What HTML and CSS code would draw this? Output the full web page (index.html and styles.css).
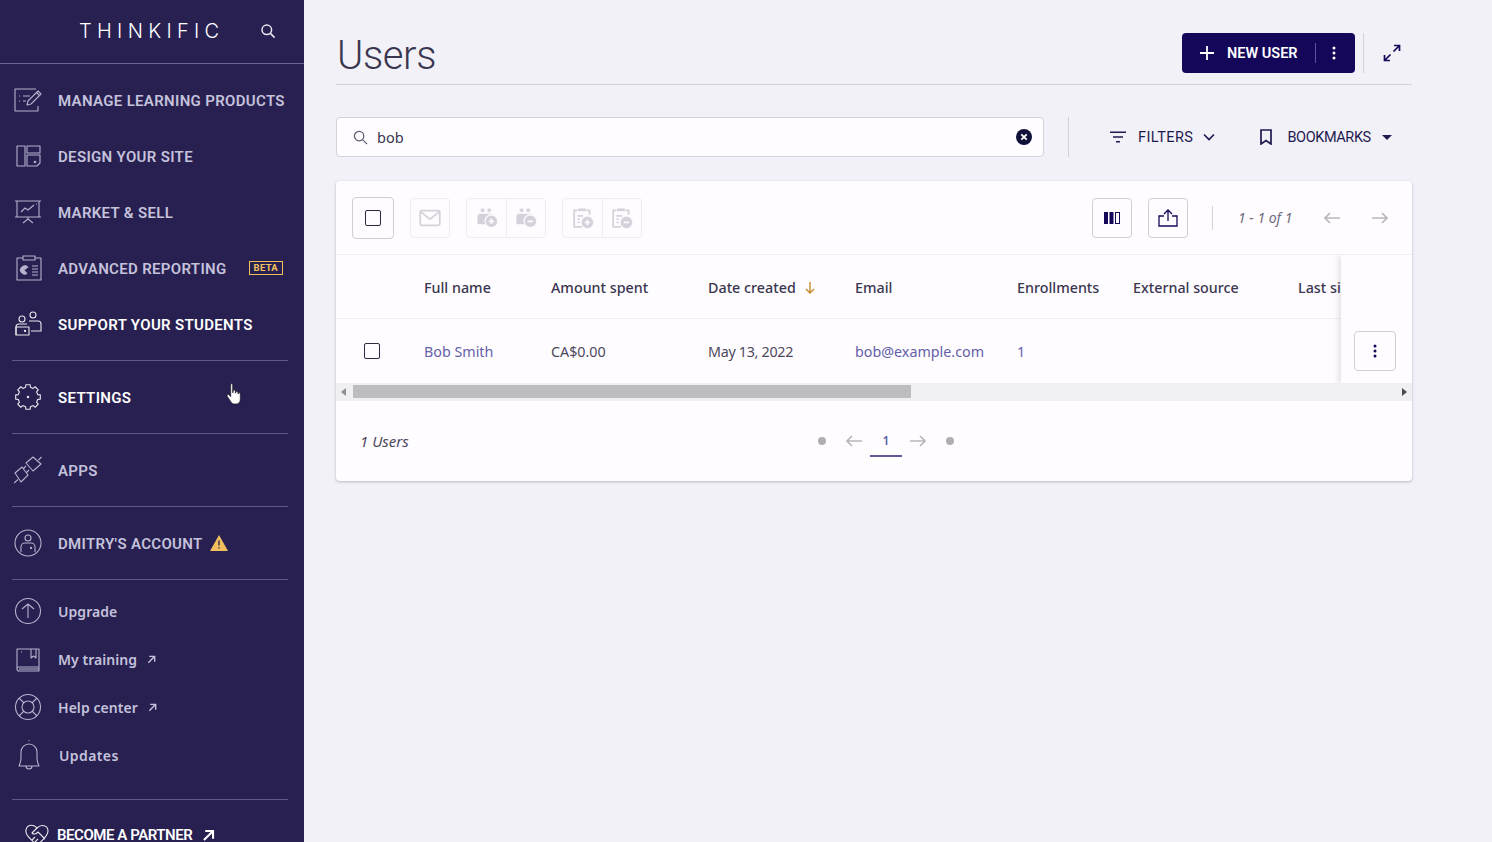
FILE: index.html
```html
<!DOCTYPE html>
<html lang="en">
<head>
<meta charset="utf-8">
<title>Users</title>
<link rel="stylesheet" href="styles.css">
</head>
<body>
<div class="app">
<aside class="sidebar">
  <div class="brand">
    <span class="logo">THINKIFIC</span>
    <svg class="brand-search" viewBox="0 0 16 16"><circle cx="6.800" cy="6.800" r="4.800"/><path d="M10.400 10.400l4.200 4.200"/></svg>
  </div>
  <nav class="section">
    <a class="item"><svg class="ico" viewBox="0 0 28 24"><path d="M22 1H1v22h23v-5"/><path d="M5 8h1M5 13h1M9 8h7M9 13h3"/><path d="M13 17l1-4 10-10 3 3-10 10zM22 4l3 3"/></svg><span>MANAGE LEARNING PRODUCTS</span></a>
    <a class="item"><svg class="ico" viewBox="0 0 28 24"><rect x="3" y="2" width="8" height="20"/><rect x="13" y="2" width="13" height="7"/><path d="M13 11h13v8l-3 3H13z"/><circle cx="21" cy="18" r=".8"/></svg><span>DESIGN YOUR SITE</span></a>
    <a class="item"><svg class="ico" viewBox="0 0 28 24"><path d="M1 1h26M3 1v16M25 1v16M1 17h26M14 17v2M9 23l5-4 5 4"/><path d="M7 12l4-4 3 2 6-5M22 4h1"/></svg><span>MARKET &amp; SELL</span></a>
    <a class="item"><svg class="ico" viewBox="0 0 28 26"><path d="M9 3H3v22h24V3h-6"/><rect x="9" y="1" width="12" height="4"/><path class="fill" d="M13.500 11.600a4.500 4.500 0 1 0 0 6.800l-3-3.400z"/><path class="fill" d="M11 10.300a4.500 4.500 0 0 1 3.500 2L11 14.800z"/><path d="M18 11h6M18 14h6M18 17h6M18 20h6"/></svg><span>ADVANCED REPORTING</span><b class="beta">BETA</b></a>
    <a class="item on"><svg class="ico" viewBox="0 0 28 26"><circle cx="8" cy="8" r="3"/><circle cx="19" cy="4" r="3"/><path d="M2 24v-8a3 3 0 0 1 3-3h8M15 10h9a3 3 0 0 1 3 3v7H17"/><path d="M2 16h13v8H2z"/><circle cx="11" cy="20" r=".6"/></svg><span>SUPPORT YOUR STUDENTS</span></a>
  </nav>
  <nav class="section rule">
    <a class="item on"><svg class="ico" viewBox="0 0 28 26"><path d="M23.700 10.580L26.310 10.830V15.170L23.700 15.420L22.570 18.150L24.240 20.170L21.170 23.240L19.150 21.570L16.420 22.700L16.170 25.310H11.830L11.580 22.700L8.850 21.570L6.830 23.240L3.760 20.170L5.430 18.150L4.300 15.420L1.690 15.170V10.830L4.300 10.580L5.430 7.850L3.760 5.830L6.830 2.760L8.850 4.430L11.580 3.300L11.830 .69H16.170L16.420 3.300L19.150 4.430L21.170 2.760L24.240 5.830L22.570 7.850z"/><circle cx="14" cy="13" r=".7"/></svg><span>SETTINGS</span></a>
  </nav>
  <nav class="section rule">
    <a class="item"><svg class="ico" viewBox="0 0 28 28"><path d="M12 7l7-6 8 7-8 7zM1 17l7-6 6 8-7 7zM0 27l4-3.500M27.500 1l-3 3M12 10L9 13M15 14l-3 3"/></svg><span>APPS</span></a>
  </nav>
  <nav class="section rule">
    <a class="item"><svg class="ico" viewBox="0 0 28 28"><circle cx="14" cy="14" r="13"/><circle cx="14" cy="9" r="3"/><path d="M7 23v-5a4 4 0 0 1 4-4h6a4 4 0 0 1 4 4v5"/><circle cx="17" cy="19" r=".6"/></svg><span>DMITRY'S ACCOUNT</span><svg class="warn" viewBox="0 0 20 18"><path d="M10 1l9 16H1z"/><path class="mark" d="M10 6.500v5M10 13.200v1.400"/></svg></a>
  </nav>
  <nav class="section rule minor">
    <a class="item small"><svg class="ico" viewBox="0 0 28 28"><circle cx="14" cy="14" r="12.500"/><path d="M14 21V7M8 12l6-5 6 5"/></svg><span>Upgrade</span></a>
    <a class="item small"><svg class="ico" viewBox="0 0 28 26"><path d="M3 21V3h22v18H5a2 2 0 0 0 0 4h20v-4M3 21v2"/><path d="M17 3v9l2.500-2 2.500 2V3M7 6h1"/><path d="M5 23h20"/></svg><span>My training</span><svg class="ext" viewBox="0 0 10 10"><path d="M1.500 8.500l7-7M2.500 1.500h6v6"/></svg></a>
    <a class="item small"><svg class="ico" viewBox="0 0 28 28"><circle cx="14" cy="14" r="12.500"/><circle cx="14" cy="14" r="6"/><path d="M5 5l5 5M23 5l-5 5M5 23l5-5M23 23l-5-5"/></svg><span>Help center</span><svg class="ext" viewBox="0 0 10 10"><path d="M1.500 8.500l7-7M2.500 1.500h6v6"/></svg></a>
    <a class="item small bell"><svg class="ico" viewBox="0 0 28 32"><path d="M14 1v1M4 27c1-3 2-4 2-8v-6a8 8 0 0 1 16 0v6c0 4 1 5 2 8zM11 27a3 3 0 0 0 6 0"/></svg><span>Updates</span></a>
  </nav>
  <div class="partner rule">
    <a class="item on"><svg class="ico heart" viewBox="0 0 26 22"><path d="M13 4c-3-4-10-4-11 2-1 4 3 8 11 15 5-4 11-9 11-14 0-6-7-7-11-3l-5 5c2 2 4 1 6-1l7 7M8 16l3-3M11 18l3-3"/></svg><span>BECOME A PARTNER</span><svg class="ext big" viewBox="0 0 10 10"><path d="M1.500 8.500l7-7M2.500 1.500h6v6"/></svg></a>
  </div>
  <svg class="hand" viewBox="0 0 18 24"><path d="M5 1.500c1-.8 2 0 2 1v8h.6V8.500c.8-1 2-.8 2.300.3v2.200h.5V9.800c.8-.8 2-.5 2.200.5v1.500h.5V11c.8-.6 1.900-.2 2 .8v5.700c0 3-1.800 5-4.500 5H9c-2 0-3-1-4-2.500L1.300 14.300c-.6-1.300 1-2.300 2-1.300L5 15z"/></svg>
</aside>
<main class="main">
  <header class="head">
    <h1 class="title">Users</h1>
    <div class="head-actions">
      <div class="primary">
        <svg class="plus" viewBox="0 0 14 14"><path d="M7 0v14M0 7h14"/></svg>
        <span class="primary-label">NEW USER</span>
        <i class="primary-sep"></i>
        <svg class="kebab" viewBox="0 0 4 14"><circle cx="2" cy="2" r="1.500"/><circle cx="2" cy="7" r="1.500"/><circle cx="2" cy="12" r="1.500"/></svg>
      </div>
      <i class="head-sep"></i>
      <svg class="expand" viewBox="0 0 18 18"><path d="M10.500 7.500L16.500 1.500M11 1.500h5.500V7M7.500 10.500L1.500 16.500M7 16.500H1.500V11"/></svg>
    </div>
  </header>
  <div class="searchbar">
    <div class="search">
      <svg class="search-ico" viewBox="0 0 16 16"><circle cx="6.500" cy="6.500" r="5"/><path d="M10.200 10.200l4.800 4.800"/></svg>
      <span class="query">bob</span>
      <svg class="clear" viewBox="0 0 16 16"><circle class="clear-bg" cx="8" cy="8" r="8"/><path d="M5.300 5.300l5.400 5.400M10.700 5.300l-5.400 5.400"/></svg>
    </div>
    <i class="search-sep"></i>
    <div class="tool filters">
      <svg class="t-ico" viewBox="0 0 16 12"><path d="M0 1.200h16M3 6h10M6 10.800h4"/></svg>
      <span>FILTERS</span>
      <svg class="chev" viewBox="0 0 12 8"><path d="M1 1.500l5 5 5-5"/></svg>
    </div>
    <div class="tool bookmarks">
      <svg class="bm" viewBox="0 0 12 16"><path d="M1 1h10v14l-5-3.500L1 15z"/></svg>
      <span>BOOKMARKS</span>
      <svg class="caret" viewBox="0 0 10 5"><path d="M0 0h10L5 5z"/></svg>
    </div>
  </div>
  <section class="card">
    <div class="toolbar">
      <div class="sq select"><i class="box"></i></div>
      <div class="sq dis"><svg viewBox="0 0 18 14"><rect x="1" y="1" width="16" height="12" rx="1"/><path d="M1.500 2l7.500 6 7.500-6"/></svg></div>
      <div class="group">
        <div class="sq dis"><svg viewBox="0 0 20 20"><g class="solid"><circle cx="6" cy="3" r="2"/><circle cx="12" cy="3" r="2"/><path d="M1 15V9a3 3 0 0 1 3-3h10a3 3 0 0 1 2 1a6 6 0 0 0-7 9H2z"/></g><circle class="solid" cx="14" cy="13" r="5.500"/><path class="cut" d="M14 10.500v5M11.500 13h5"/></svg></div>
        <div class="sq dis"><svg viewBox="0 0 20 20"><g class="solid"><circle cx="6" cy="3" r="2"/><circle cx="12" cy="3" r="2"/><path d="M1 15V9a3 3 0 0 1 3-3h10a3 3 0 0 1 2 1a6 6 0 0 0-7 9H2z"/></g><circle class="solid" cx="14" cy="13" r="5.500"/><path class="cut" d="M11.500 13h5"/></svg></div>
      </div>
      <div class="group">
        <div class="sq dis"><svg viewBox="0 0 20 20"><path class="thick" d="M5 3H2v15h7M13 3h3v4"/><rect class="solid" x="5" y="1" width="8" height="3"/><path class="thick" d="M5 8h5M5 11h2M5 14h2"/><circle class="solid" cx="14" cy="14" r="5.500"/><path class="cut" d="M14 11.500v5M11.500 14h5"/></svg></div>
        <div class="sq dis"><svg viewBox="0 0 20 20"><path class="thick" d="M5 3H2v15h7M13 3h3v4"/><rect class="solid" x="5" y="1" width="8" height="3"/><path class="thick" d="M5 8h5M5 11h2M5 14h2"/><circle class="solid" cx="14" cy="14" r="5.500"/><path class="cut" d="M11.500 14h5"/></svg></div>
      </div>
      <div class="toolbar-right">
        <div class="sq act"><svg class="cols" viewBox="0 0 16 12"><path class="navy" d="M0 0h4v12H0zM5.500 0h4v12h-4z"/><rect class="navy-o" x="11.500" y=".5" width="4" height="11"/></svg></div>
        <div class="sq act"><svg class="export" viewBox="0 0 20 18"><path class="navy-l" d="M6 7H1v10h18V7h-5M10 12V1M6 5l4-4 4 4"/></svg></div>
        <i class="tb-sep"></i>
        <span class="range">1 - 1 of 1</span>
        <svg class="arr" viewBox="0 0 16 12"><path d="M16 6H1M6 1L1 6l5 5"/></svg>
        <svg class="arr" viewBox="0 0 16 12"><path d="M0 6h15M10 1l5 5-5 5"/></svg>
      </div>
    </div>
    <div class="table">
      <div class="row thead">
        <span></span><span>Full name</span><span>Amount spent</span>
        <span class="sorted">Date created<svg viewBox="0 0 10 12"><path d="M5 0v11M1 7l4 4 4-4"/></svg></span>
        <span>Email</span><span>Enrollments</span><span>External source</span><span>Last sign in</span>
      </div>
      <div class="row tbody">
        <span><i class="box"></i></span><span class="link">Bob Smith</span><span>CA$0.00</span><span class="date">May 13, 2022</span>
        <span class="link">bob@example.com</span><span class="link">1</span><span></span><span></span>
      </div>
      <div class="sticky"><div class="sq act kb"><svg viewBox="0 0 4 14"><circle cx="2" cy="2" r="1.500"/><circle cx="2" cy="7" r="1.500"/><circle cx="2" cy="12" r="1.500"/></svg></div></div>
    </div>
    <div class="scrollbar">
      <i class="sb-left"></i><div class="sb-track"><i class="sb-thumb"></i></div><i class="sb-right"></i>
    </div>
    <footer class="foot">
      <span class="count">1 Users</span>
      <div class="pager">
        <i class="dot"></i>
        <svg class="arr" viewBox="0 0 16 12"><path d="M16 6H1M6 1L1 6l5 5"/></svg>
        <span class="page">1</span>
        <svg class="arr" viewBox="0 0 16 12"><path d="M0 6h15M10 1l5 5-5 5"/></svg>
        <i class="dot"></i>
      </div>
    </footer>
  </section>
</main>
</div>
</body>
</html>
```

FILE: styles.css
```css
* { box-sizing: border-box; }
html, body { margin: 0; height: 100%; overflow: hidden; }
body { font-family: "Noto Sans", sans-serif; background: #f3f1f8; color: #3a3650; }
i { display: block; }
.app { display: flex; height: 842px; overflow: hidden; }

.sidebar { position: relative; width: 304px; flex: none; background: #272050; overflow: hidden; }
.brand { height: 64px; display: flex; align-items: center; padding: 0 28px 2px 79px; border-bottom: 1px solid #6a6496; justify-content: space-between; }
.logo { font-family: Inter, sans-serif; font-weight: 300; font-size: 20px; letter-spacing: 5.300px; color: #fff; line-height: 1; }
.brand-search { width: 16px; height: 16px; fill: none; stroke: #e9e7f2; stroke-width: 1.500; }
.section { padding: 8px 0; }
.rule { margin: 0 16px 0 12px; border-top: 1px solid #5f5a8a; }
.section.rule .item { margin: 0 -16px 0 -12px; }
.section.minor { padding-bottom: 20px; padding-top: 7px; }
.item { display: flex; align-items: center; height: 56px; padding-left: 14px; font-family: Roboto, sans-serif; font-weight: 600; font-size: 15px; letter-spacing: .33px; color: #c5c2dc; white-space: nowrap; }
.item > span { margin-top: 2px; }
.item.on { color: #fff; }
.ico { width: 28px; height: 28px; margin-right: 16px; flex: none; fill: none; stroke: currentColor; stroke-width: 1.100; opacity: .9; stroke-linejoin: round; }
.ico .fill { fill: currentColor; stroke: none; }
.beta { margin-left: 22px; border: 1px solid #f3c25f; color: #f3c25f; font-size: 9.500px; font-weight: 700; line-height: 12px; padding: 0 4px; letter-spacing: .3px; }
.warn { width: 20px; height: 18px; margin-left: 6px; fill: #f2bf5e; }
.warn .mark { stroke: #272050; stroke-width: 1.300; fill: none; }
.item.small { height: 48px; font-family: "Noto Sans", sans-serif; font-weight: 600; font-size: 14px; letter-spacing: .05px; }
.item.small > span { margin-top: 0; }
.item.bell { padding-left: 15px; }
.item.bell .ico { height: 32px; }
.item.bell > span { letter-spacing: .4px; }
.ext { width: 9px; height: 9px; margin-left: 10px; fill: none; stroke: currentColor; stroke-width: 1.600; }
.ext.big { width: 13px; height: 13px; stroke: #fff; stroke-width: 1.600; margin-left: 10px; }
.partner .item { margin: 0 -16px 0 -12px; height: 70px; padding-left: 24px; font-size: 15px; letter-spacing: -.45px; }
.partner .item > span { margin-top: 0; }
.partner .ico { width: 26px; height: 22px; margin-right: 7px; }
.hand { position: absolute; left: 226px; top: 382px; width: 17px; height: 24px; fill: #fff; stroke: #111; stroke-width: .6; }

.main { flex: 1; padding: 0 80px 0 32px; min-width: 0; }
.head { height: 85px; display: flex; justify-content: space-between; align-items: flex-start; padding-top: 33px; border-bottom: 1px solid #d4d2d8; }
.title { margin: -1px 0 0 1px; font-family: Roboto, sans-serif; font-weight: 300; font-size: 40px; line-height: 48px; letter-spacing: -.4px; color: #3a3650; }
.head-actions { display: flex; align-items: center; }
.primary { width: 173px; height: 40px; background: #14075a; border-radius: 4px; display: flex; align-items: center; padding-left: 18px; color: #fff; }
.plus { width: 14px; height: 14px; stroke: #fff; stroke-width: 1.800; fill: none; }
.primary-label { margin-left: 13px; font-family: Roboto, sans-serif; font-weight: 600; font-size: 14.500px; letter-spacing: 0; white-space: nowrap; }
.primary-sep { width: 1px; height: 20px; background: #5d54a0; margin-left: 17px; }
.kebab { width: 4px; height: 14px; margin-left: 16px; fill: #fff; }
.head-sep { width: 1px; height: 40px; background: #d4d2d8; margin-left: 8px; }
.expand { width: 18px; height: 18px; margin: 0 11px 0 19px; fill: none; stroke: #14075a; stroke-width: 1.700; }

.searchbar { display: flex; align-items: center; margin-top: 32px; height: 40px; }
.search { width: 708px; height: 40px; background: #fefcff; border: 1px solid #d4d2dc; border-radius: 4px; display: flex; align-items: center; padding: 0 11px 0 16px; }
.search-ico { width: 15px; height: 15px; fill: none; stroke: #5b5870; stroke-width: 1.300; }
.query { margin-left: 9px; font-size: 14.500px; color: #3a3650; flex: 1; }
.clear { width: 16px; height: 16px; fill: none; stroke: #fff; stroke-width: 1.800; }
.clear-bg { fill: #10103a; stroke: none; }
.search-sep { width: 1px; height: 40px; background: #d4d2d8; margin-left: 24px; }
.tool { display: flex; align-items: center; font-family: Roboto, sans-serif; font-size: 14.500px; color: #1e1a50; white-space: nowrap; }
.filters { margin-left: 41px; letter-spacing: .45px; }
.bookmarks { margin-left: 45px; letter-spacing: -.4px; }
.t-ico { width: 16px; height: 12px; margin-right: 12px; fill: none; stroke: #1e1a50; stroke-width: 1.500; }
.chev { width: 12px; height: 8px; margin-left: 10px; fill: none; stroke: #1e1a50; stroke-width: 1.700; }
.bm { width: 12px; height: 16px; margin-right: 15px; fill: none; stroke: #1e1a50; stroke-width: 1.700; }
.caret { width: 10px; height: 5px; margin-left: 11px; fill: #1e1a50; }

.card { margin-top: 24px; background: #fefcff; border-radius: 4px; height: 300px; box-shadow: 0 1px 3px rgba(40, 30, 70, .28); overflow: hidden; }
.toolbar { height: 74px; border-bottom: 1px solid #f0eef3; display: flex; align-items: center; padding: 0 24px 0 16px; }
.sq { width: 40px; height: 40px; display: flex; align-items: center; justify-content: center; border: 1px solid #eeecf2; border-radius: 4px; flex: none; }
.select { width: 42px; height: 42px; border-color: #cfcdd6; margin-right: 16px; }
.box { width: 16px; height: 16px; border: 1.300px solid #2b2840; border-radius: 2px; display: block; }
.dis svg { width: 22px; height: 22px; }
.dis > svg { fill: none; stroke: #d4d1da; stroke-width: 1.400; }
.dis .solid { fill: #d4d1da; stroke: #fefcff; stroke-width: .6; }
.dis .cut { stroke: #fefcff; stroke-width: 1.500; }
.dis .thick { stroke-width: 1.600; }
.group { display: flex; margin-left: 16px; border: 1px solid #eeecf2; border-radius: 4px; height: 40px; }
.group .sq { border: 0; height: 38px; width: 39px; }
.group .sq + .sq { border-left: 1px solid #eeecf2; border-radius: 0; }
.toolbar-right { margin-left: auto; display: flex; align-items: center; }
.act { border-color: #d0ced8; }
.cols { width: 16px; height: 12px; }
.export { width: 20px; height: 18px; }
.navy { fill: #14075a; }
.navy-o { fill: none; stroke: #14075a; stroke-width: 1; }
.navy-l { fill: none; stroke: #14075a; stroke-width: 1.300; }
.toolbar-right .act + .act { margin-left: 16px; }
.tb-sep { width: 1px; height: 24px; background: #d4d2d8; margin-left: 24px; }
.range { margin-left: 25px; font-style: italic; font-size: 14px; color: #6e6b7c; width: 64px; white-space: nowrap; }
.arr { width: 16px; height: 12px; fill: none; stroke: #b8b6bc; stroke-width: 1.600; }
.range + .arr { margin-left: 22px; }
.arr + .arr { margin-left: 32px; }

.table { position: relative; overflow: hidden; }
.row { display: grid; grid-template-columns: 72px 127px 157px 147px 162px 116px 165px 130px; align-items: center; white-space: nowrap; font-size: 14.300px; }
.row span { padding-left: 16px; }
.thead { height: 64px; padding-top: 2px; border-bottom: 1px solid #f0eef3; font-weight: 500; color: #3a3650; }
.tbody { height: 64px; color: #4c495c; }
.tbody .box { margin-left: 28px; }
.tbody span:first-child { padding-left: 0; }
.date { letter-spacing: -.3px; }
.link { color: #6460a8; }
.sorted { display: flex; align-items: center; }
.sorted svg { width: 10px; height: 12px; margin-left: 9px; fill: none; stroke: #c98a2b; stroke-width: 1.400; }
.sticky { position: absolute; right: 0; top: 0; bottom: 0; width: 71px; background: #fefcff; box-shadow: -2px 1px 6px rgba(40, 30, 70, .14); display: flex; align-items: flex-end; justify-content: center; padding: 0 3px 12px 0; }
.kb { width: 42px; height: 40px; }
.kb svg { width: 4px; height: 14px; fill: #14075a; }

.scrollbar { height: 18px; background: #f0eff2; display: flex; align-items: center; justify-content: space-between; padding: 0 5px; }
.sb-left { border: 4px solid transparent; border-right: 5px solid #8f8e94; border-left: 0; }
.sb-right { border: 4px solid transparent; border-left: 5px solid #4d4c54; border-right: 0; }
.sb-track { flex: 1; margin: -1px 6px 0 7px; height: 13px; }
.sb-thumb { width: 558px; height: 13px; background: #bdbcc0; }

.foot { display: flex; align-items: center; height: 80px; padding: 0 24px; position: relative; }
.count { font-style: italic; font-size: 15px; color: #4c495c; width: 458px; }
.pager { display: flex; align-items: center; height: 32px; }
.dot { width: 8px; height: 8px; border-radius: 50%; background: #b0aeb4; }
.pager .dot + .arr { margin-left: 20px; }
.page { width: 32px; height: 32px; margin: 0 8px; font-size: 12px; font-weight: 600; color: #5b5fa8; text-align: center; line-height: 32px; border-bottom: 2px solid #5f5a9a; }
.pager .arr + .dot { margin-left: 20px; }
```
